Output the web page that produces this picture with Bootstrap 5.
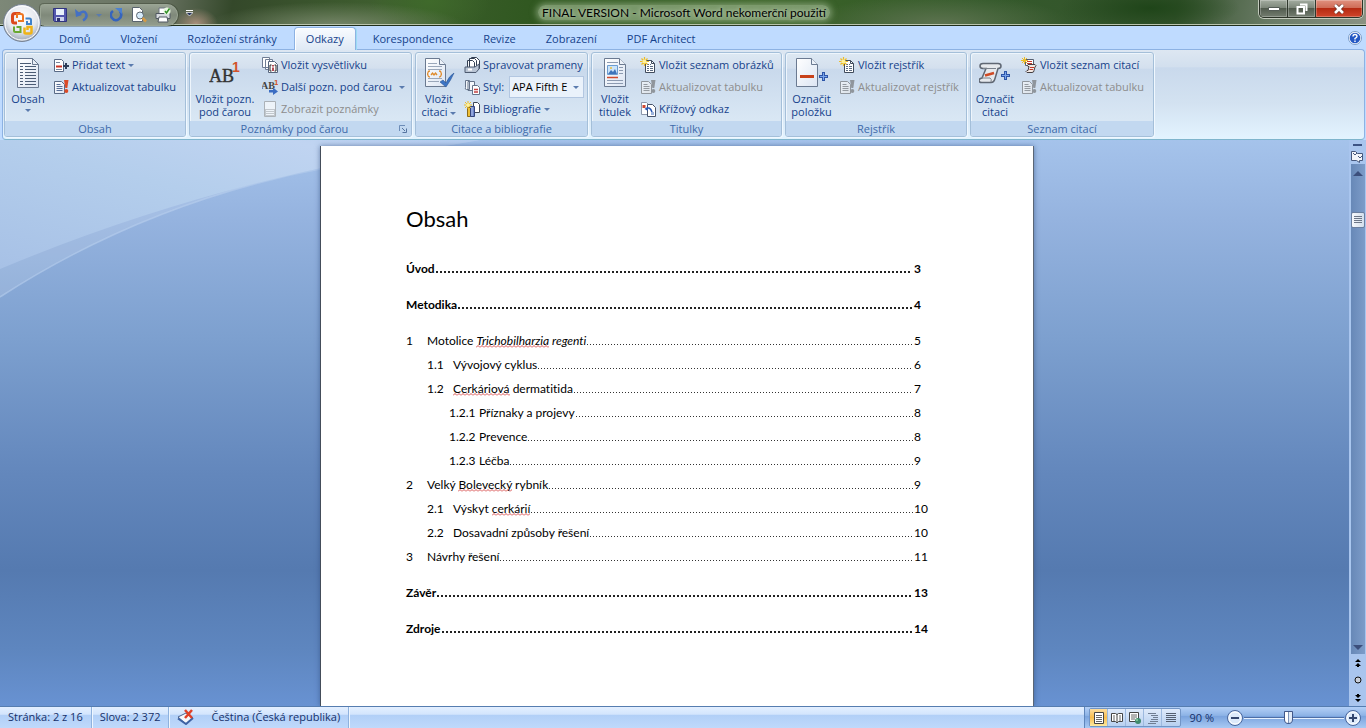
<!DOCTYPE html>
<html lang="cs">
<head>
<meta charset="utf-8">
<meta name="viewport" content="width=device-width, initial-scale=1">
<title>FINAL VERSION - Microsoft Word nekomerční použití</title>
<link href="https://cdn.jsdelivr.net/npm/bootstrap@5.3.0/dist/css/bootstrap.min.css" rel="stylesheet">
<style>
body{font-family:"Open Sans","Noto Sans",sans-serif;font-size:11px;line-height:14px;color:#15428b;background:#bfdbff}
svg{display:block;flex:none}
button{font:inherit;color:inherit;background:none;border:0;padding:0}
a{color:inherit;text-decoration:none}

/* title bar */
.titlebar{height:26px;border-bottom:1px solid #20301c;box-shadow:inset 0 -1px #b9c4ae;
  background:
  radial-gradient(ellipse 22px 16px at 196px 24px,#a98f7c 0,transparent 100%),
  radial-gradient(ellipse 130px 24px at 335px 26px,#77876a 0,transparent 100%),
  radial-gradient(ellipse 60px 40px at 430px 0,#3f6a2b 0,transparent 100%),
  radial-gradient(ellipse 130px 30px at 940px 24px,#5d7350 0,transparent 100%),
  radial-gradient(ellipse 90px 24px at 1150px 8px,#1f4519 0,transparent 100%),
  linear-gradient(100deg,#7d8878 0,#66705f 12%,#34482a 17%,#3f5f2f 28%,#2f571f 40%,#3b6327 55%,#33592a 72%,#36542e 86%,#6a7b66 93%,#8a9283 100%)}
.titlearea{flex:1 1 0}
.qat{width:138px;height:22px;margin-left:40px;padding-left:12px;border:1px solid #9aa594;border-radius:4px 12px 12px 4px;background:linear-gradient(#98a293,#7f897a 50%,#929c8d);box-shadow:0 0 0 1px #3038285e}
.orb{position:absolute;left:2px;top:3px;width:40px;height:40px;z-index:5}
.wtitle{font-family:Lato,sans-serif;font-size:12px;line-height:18px;color:#000;padding-left:2px}
.wtitle span{padding:0 4px;border-radius:8px;background:#a9bf9b99;box-shadow:0 0 6px 2px #a9bf9b99;text-shadow:0 0 4px #dce8d4}
.winbtns{height:18px;border:1px solid #2b3328;border-top:0;border-radius:0 0 5px 5px;box-shadow:0 0 0 1px #c3cabd;overflow:hidden;margin-right:3px}
.winbtns button{width:28px;height:17px;background:linear-gradient(#a3aca0,#7b8578 48%,#525c4f 50%,#747d70);border-right:1px solid #2f372c;box-shadow:inset 0 0 0 1px #ffffff40;display:flex;align-items:center;justify-content:center}
.winbtns .xbtn{width:46px;border-right:0;background:linear-gradient(#e0917f,#ce6a55 48%,#b52a12 50%,#d0452b)}

/* tabs */
.rtabs{height:23px;padding-left:44px;background:#bfdbff}
.rtabs .rtab{padding:6px 15px 3px;font-size:11px;line-height:14px;height:23px}
.rtabs .rtab.active{margin:1px 2px 0;padding:4px 11px 3px;border:1px solid #8db2e3;border-bottom:0;border-radius:4px 4px 0 0;background:linear-gradient(#f8fbff,#dfe9f5);box-shadow:inset 1px 1px #fff,1px 0 #9ddcf2;height:23px;z-index:2}

/* ribbon */
.ribbon{margin:0 1px 0 2px;height:91px;padding:2px 1px;gap:3px;border:1px solid #8db2e3;border-radius:4px;border-bottom-color:#7fb5cd;
  background:linear-gradient(#dde7f2 0,#d2dfee 19%,#c9d9ec 20%,#d3e2f1 60%,#e3f4ff 100%)}
.rgroup{border:1px solid #a4bfd9;border-radius:3px;box-shadow:1px 1px #f0f8ff,inset 1px 1px #eef5fc;height:85px;background:linear-gradient(#dde8f3 0,#d4e0ee 18%,#c9d9ec 20%,#d9e7f4 80%)}
.rbody{height:68px}
.rfoot{height:15px;background:#c2d8f0;color:#3e6aaa;line-height:15px;border-radius:0 0 2px 2px}
.bigbtn{line-height:13px;padding-top:4px;margin-right:2px;display:flex;flex-direction:column;align-items:center}
.bigbtn span{white-space:nowrap;margin-top:3px}
.smalls{padding-top:1px}
.sbtn{height:22px;display:flex;align-items:center;gap:3px;white-space:nowrap}
.sbtn:disabled{color:#8d8d8d}
.sbtn:disabled svg{filter:grayscale(1);opacity:.6}
.caret{width:0;height:0;border:3px solid transparent;border-top-color:#5a7bae;border-bottom:0}
.g1{width:182px}.g2{width:223px}.g3{width:173px}.g4{width:191px}.g5{width:182px}.g6{width:184px}
.w1,.w3,.w4{width:46px}.w2{width:70px}.w5{width:51px}.w6{width:48px}
.stylebox{width:75px;height:22px;border:1px solid #b3c7e1;background:#eaf2fb;color:#000;font:inherit;padding:0 0 0 2px;appearance:none;border-radius:0}
.stylewrap{margin-left:2px}
.stylewrap .caret{position:absolute;right:5px;top:10px;pointer-events:none}

/* workspace */
.work{background:linear-gradient(#a5c3eb 0,#95b3df 14%,#7da0cf 35%,#6488bd 58%,#557ab0 76%,#5e86bf 90%,#6892d2 100%);overflow:hidden}
.swoosh{position:absolute;left:0;top:0}
.sheetcol{padding:6px 0 0 5px}
.sheet{width:714px;background:#fff;color:#000;border-left:1px solid #444d5a;border-right:1px solid #5b6675;box-shadow:0 0 5px #2c4a7a99;padding:57px 105px 0 85px;font-family:Lato,sans-serif;font-size:12px;font-variant-ligatures:none}
.sheet h1{font-size:22px;line-height:32px;font-weight:400;margin:0 0 22px}
.toc{line-height:24px}
.toc li{display:flex;white-space:pre}
.toc .top{font-weight:700;margin:12px 0}
.toc .l1 .num{width:21px}
.toc .l2{padding-left:21px}.toc .l2 .num{width:26px}
.toc .l3{padding-left:43px}.toc .l3 .num{width:30px}
.dots{flex:1;margin:0 1px 0 1px;background:repeating-linear-gradient(90deg,#333 0 1px,transparent 1px 3px) 0 15px/100% 1px no-repeat}
.top .dots{margin-right:2px;background:repeating-linear-gradient(90deg,#222 0 2px,transparent 2px 4px) 0 14px/100% 2px no-repeat}
.pg{width:14px}
.sp{background:url("data:image/svg+xml,%3Csvg xmlns='http://www.w3.org/2000/svg' width='4' height='3'%3E%3Cpath d='M0 2.500L2 .5L4 2.500' fill='none' stroke='%23d23a3a' stroke-width='.9'/%3E%3C/svg%3E") 0 100%/4px 3px repeat-x}
.scrollcol{width:17px;background:#a9c5ee}
.track{width:15px;background:linear-gradient(90deg,#6788b7,#7d9cc9);border-left:1px solid #a9c6ee}
.thumb{width:14px;height:16px;margin-top:32px;border:1px solid #6a7fa0;border-radius:2px;background:linear-gradient(90deg,#f5f8fc,#d3deec)}

/* status bar */
.status{height:22px;border-top:1px solid #567db0;color:#15306a;background:linear-gradient(#e3efff 0,#d3e5fd 35%,#b1cff7 38%,#bfd9fb 100%)}
.status .cell{padding:0 8px 2px;height:21px;display:flex;align-items:center;border-right:1px solid #8fb2de;box-shadow:1px 0 #eef6ff}
.status .tools{background:linear-gradient(#b3d0f7,#8db3e6 40%,#7ba4de 45%,#a8c9f3);border-left:1px solid #5f86bb;padding-left:4px}
.views{height:19px;border:1px solid #7295c6;border-radius:2px;background:linear-gradient(#dfeafa,#b8d0f0)}
.views button{width:18px;height:17px;display:flex;align-items:center;justify-content:center;border-right:1px solid #9db9de}
.views button:last-child{border-right:0}
.views .on{background:linear-gradient(#fbdda0,#f7bd4e 50%,#fde9a0)}
.zoomr{appearance:none;width:100px;height:16px;background:linear-gradient(#4c6ea6,#4c6ea6) 0 7px/100% 1px no-repeat,linear-gradient(#e5f0ff,#e5f0ff) 0 8px/100% 1px no-repeat;margin:0}
.zoomr::-webkit-slider-thumb{appearance:none;width:9px;height:13px;border:1px solid #41588a;border-radius:1px 1px 5px 5px;background:linear-gradient(90deg,#fff 40%,#7d93b8 40% 60%,#dfe9f6 60%)}
</style>
</head>
<body class="vh-100 d-flex flex-column overflow-hidden">

<svg width="0" height="0" class="position-absolute" aria-hidden="true"><defs>
<linearGradient id="pg" x1="0" y1="0" x2="1" y2="1"><stop offset="0" stop-color="#fff"/><stop offset="1" stop-color="#dce5f3"/></linearGradient>
<radialGradient id="orbg" cx=".5" cy=".35" r=".65"><stop offset="0" stop-color="#fff"/><stop offset=".6" stop-color="#e4e8ee"/><stop offset="1" stop-color="#98a2b2"/></radialGradient>
<linearGradient id="sw" x1="0" y1="1" x2="1" y2="0"><stop offset="0" stop-color="#a7c1e6"/><stop offset=".5" stop-color="#b4ceec"/><stop offset=".8" stop-color="#c0d4f1"/><stop offset="1" stop-color="#b4cdf0"/></linearGradient>
<symbol id="upd" viewBox="0 0 16 16"><path d="M1.500 2.500h7l3 3v9h-10z" fill="url(#pg)" stroke="#596a86"/><path d="M3.500 5.500h4m-4 2h6m-6 2h6m-6 2h6" stroke="#586f97"/><path d="M11 1h4.500l-1.200 8h-2z" fill="#dc4a26"/><circle cx="13.300" cy="12" r="2" fill="#dc4a26"/></symbol>
<symbol id="newlist" viewBox="0 0 16 16"><path d="M5.500 3.500h6l3 3v9h-9z" fill="#fff" stroke="#404b5c"/><path d="M11.500 3.500v3h3" fill="none" stroke="#404b5c"/><path d="M7 7.500h2m1 0h1m-4 2h2m1 0h3m-6 2h2m1 0h3m-6 2h2m1 0h3" stroke="#5c6c84"/><path d="M4.500 0v9M0 4.500h9M1.500 1.500l6 6m0-6l-6 6" stroke="#edbd27" stroke-width="1.200"/><circle cx="4.500" cy="4.500" r="2" fill="#fff29a"/></symbol>
</defs></svg>

<header class="position-relative flex-shrink-0">
  <button class="orb" aria-label="Tlačítko Office"><svg width="40" height="40" viewBox="0 0 40 40"><circle cx="20" cy="20" r="18.500" fill="url(#orbg)" stroke="#788393"/><circle cx="20" cy="20" r="17" fill="none" stroke="#fff"/>
    <g fill="none" stroke-width="3"><path d="M18.500 10.500h-5.500q-2.500 0-2.500 2.500v5q0 2 2 2h2.500" stroke="#dc481c"/><path d="M15 15v-4h4q2 0 2 2v5h-5" stroke="#ee7722" stroke-width="2"/><path d="M23.500 15.500h4q1.500 0 1.500 1.500v4h-4v-3" stroke="#3f82c8" stroke-width="2"/><path d="M12 23.500v4q0 1.500 1.500 1.500h5v-5h-4" stroke="#69a832" stroke-width="2"/><path d="M22.500 24.500v5q0 1 1.500 1h4q1.500 0 1.500-1.500v-5h-4v3" stroke="#f0b316" stroke-width="2.500"/></g></svg></button>

  <div class="titlebar d-flex">
    <div class="titlearea d-flex align-items-start pt-1">
      <div class="qat d-flex align-items-center me-2 mt-n1">
        <button aria-label="Uložit"><svg width="14" height="14" viewBox="0 0 14 14"><path d="M.5.5h13v13h-12l-1-1z" fill="#5457ad" stroke="#30347f"/><path d="M3 1h8v6H3z" fill="#eaf1fb"/><path d="M3 9h8v4H3z" fill="#cdd3ec"/><path d="M4 10h3v3H4z" fill="#2e336f"/></svg></button>
        <button class="ms-2" aria-label="Zpět"><svg width="13" height="14" viewBox="0 0 13 14"><path d="M3 6.500q6-5 8-1t-3 7" fill="none" stroke="#4470c4" stroke-width="2.500"/><path d="M0 1l1 8 6-2z" fill="#4470c4"/></svg></button>
        <span class="caret mx-2"></span>
        <button aria-label="Opakovat"><svg width="13" height="14" viewBox="0 0 13 14"><path d="M10 3q3 5-1 8t-7-1 1-7" fill="none" stroke="#3564bd" stroke-width="2.500"/><path d="M5 0h7v6z" fill="#4b80d0"/></svg></button>
        <button class="ms-2" aria-label="Náhled"><svg width="16" height="16" viewBox="0 0 16 16"><path d="M1.500.500h7l3 3v11h-10z" fill="#fff" stroke="#59636d"/><circle cx="9" cy="8.500" r="3.500" fill="#d7ebfa" stroke="#5b6670"/><path d="M11.500 11l3.500 3.500" stroke="#d59a45" stroke-width="2.500"/></svg></button>
        <button class="ms-2" aria-label="Rychlý tisk"><svg width="16" height="16" viewBox="0 0 16 16"><path d="M4 1h7v6H4z" fill="#fff" stroke="#6c747e"/><path d="M1 6.500h14v5H1z" fill="#d5d9de" stroke="#505862"/><path d="M4 10h8l1 5H3z" fill="#fff" stroke="#505862"/><circle cx="12" cy="4" r="3.500" fill="#e8f7e0"/><path d="M10 4l1.500 2L14.500 1.500" fill="none" stroke="#339128" stroke-width="1.500"/></svg></button>
      </div>
      <button class="mt-1" aria-label="Přizpůsobit"><svg width="7" height="9" viewBox="0 0 7 9"><path d="M0 2.500h7" stroke="#fff"/><path d="M0 4.500h7L3.500 8z" fill="#26345a" stroke="#fff" stroke-width=".7"/></svg></button>
    </div>
    <div class="wtitle text-center pt-1"><span>FINAL VERSION - Microsoft Word nekomerční použití</span></div>
    <div class="titlearea d-flex justify-content-end">
      <div class="winbtns d-flex">
        <button aria-label="Minimalizovat"><svg width="12" height="6"><path d="M.5 1.500h11v3H.5z" fill="#fff" stroke="#535b55"/></svg></button>
        <button aria-label="Obnovit"><svg width="12" height="12" viewBox="0 0 12 12"><path d="M4 1.500h6.500v6.500M1.500 4h6.500v6.500h-6.500z" fill="none" stroke="#fff" stroke-width="2"/></svg></button>
        <button class="xbtn" aria-label="Zavřít"><svg width="12" height="10" viewBox="0 0 12 10"><path d="M2 1l8 8m0-8l-8 8" stroke="#6a3026" stroke-width="4"/><path d="M2 1l8 8m0-8l-8 8" stroke="#fff" stroke-width="2.600"/></svg></button>
      </div>
    </div>
  </div>

  <nav class="rtabs d-flex" aria-label="Karty">
    <a class="rtab" href="#">Domů</a><a class="rtab" href="#">Vložení</a><a class="rtab" href="#">Rozložení stránky</a><a class="rtab active" href="#" aria-current="page">Odkazy</a><a class="rtab" href="#">Korespondence</a><a class="rtab" href="#">Revize</a><a class="rtab" href="#">Zobrazení</a><a class="rtab" href="#">PDF Architect</a>
    <button class="ms-auto me-1" aria-label="Nápověda"><svg width="14" height="14" viewBox="0 0 14 14"><circle cx="7" cy="7" r="6.500" fill="#fff" stroke="#7a9cc8"/><circle cx="7" cy="7" r="5.300" fill="#2458c4"/><path d="M5 5.500q0-2 2-2t2 1.800q0 1-2 2.200v1M7 9.500v1.500" fill="none" stroke="#fff" stroke-width="1.400"/></svg></button>
  </nav>

  <div class="ribbon d-flex">
    <section class="rgroup g1">
      <div class="rbody d-flex">
        <button class="bigbtn w1"><svg width="32" height="32" viewBox="0 0 32 32"><path d="M5.500 1.500h15l6 6v23h-21z" fill="url(#pg)" stroke="#6b7a91"/><path d="M20.500 1.500v6h6z" fill="#e8eef6" stroke="#6b7a91"/><path d="M8 6.500h11M8 9.500h3m2 0h11M8 12.500h3m2 0h11M8 15.500h3m2 0h11M8 18.500h3m2 0h11M8 21.500h3m2 0h11M8 24.500h3m2 0h11M8 27.500h3m2 0h11" stroke="#4a5b74"/></svg><span>Obsah</span><i class="caret mt-1"></i></button>
        <div class="smalls">
          <button class="sbtn"><svg width="16" height="16" viewBox="0 0 16 16"><path d="M1.500 2.500h7l2 2v10h-9z" fill="#fff" stroke="#596a86"/><path d="M3 5.500h4m-4 7h6" stroke="#76859c"/><path d="M3 9.500h6" stroke="#ca3426" stroke-width="2"/><path d="M13 6v6m-3-3h6" stroke="#2e3d58" stroke-width="2"/></svg>Přidat text<i class="caret"></i></button>
          <button class="sbtn"><svg width="16" height="16"><use href="#upd"/></svg>Aktualizovat tabulku</button>
        </div>
      </div>
      <div class="rfoot text-center">Obsah</div>
    </section>

    <section class="rgroup g2">
      <div class="rbody d-flex">
        <button class="bigbtn w2"><svg width="32" height="32" viewBox="0 0 32 32"><text x="0" y="25" font-family="Liberation Serif,serif" font-size="18" fill="#333" stroke="#333" stroke-width=".4">AB</text><text x="23" y="15" font-family="Liberation Sans,sans-serif" font-size="14" font-weight="700" fill="#d3532b">1</text></svg><span>Vložit pozn.<br>pod čarou</span></button>
        <div class="smalls">
          <button class="sbtn"><svg width="16" height="16" viewBox="0 0 16 16"><path d="M.500.500h7v10h-7zM3.500 2.500h7v10h-7z" fill="#fff" stroke="#6f7d94"/><path d="M6.500 4.500h6l3 3v8h-9z" fill="#fff" stroke="#56657d"/><path d="M9.500 8H8v6h1.500m3-6h1.500v6h-1.500" fill="none" stroke="#222"/><path d="M11 8v1.500m0 1v3.500" stroke="#a11f2c" stroke-width="1.600"/></svg>Vložit vysvětlivku</button>
          <button class="sbtn"><svg width="16" height="16" viewBox="0 0 16 16"><text x="-1" y="10" font-family="Liberation Serif,serif" font-size="10" font-weight="700" fill="#444">AB</text><text x="12" y="6" font-family="Liberation Sans,sans-serif" font-size="8" font-weight="700" fill="#d3532b">1</text><path d="M7 11h4V8.500l5 4-5 3.500v-2.500H7z" fill="#3b6dc2"/></svg>Další pozn. pod čarou<i class="caret ms-1"></i></button>
          <button class="sbtn" disabled><svg width="16" height="16" viewBox="0 0 16 16"><path d="M2.500.5h11v15h-11z" fill="#fff" stroke="#8793a5"/><path d="M3 8h10v7H3z" fill="#aab6c8"/><path d="M4 9.500h8m-8 2h8m-8 2h8" stroke="#fff"/></svg>Zobrazit poznámky</button>
        </div>
      </div>
      <div class="rfoot d-flex align-items-center pe-1"><button class="order-2" aria-label="Další nastavení"><svg width="8" height="8" viewBox="0 0 8 8"><path d="M.5 6V.5H6" fill="none" stroke="#6c8cb7"/><path d="M3 3l3 3M7.500 3.500v4h-4" fill="none" stroke="#55749f"/></svg></button><span class="flex-fill text-center">Poznámky pod čarou</span></div>
    </section>

    <section class="rgroup g3">
      <div class="rbody d-flex">
        <button class="bigbtn w3"><svg width="32" height="32" viewBox="0 0 32 32"><path d="M2.500 1.500h14l6 6v22h-20z" fill="url(#pg)" stroke="#6b7a91"/><path d="M16.500 1.500v6h6" fill="#edf2f9" stroke="#6b7a91"/><path d="M5 6.500h9M5 9.500h14M5 12.500h14M5 21.500h14M5 24.500h11" stroke="#9aa7ba"/><path d="M7 14q-2 0-2 1.500T4 17q1 0 1 1.500T7 20m9-6q2 0 2 1.500t1 1.500q-1 0-1 1.500T16 20M8 18l1.500-2 1.500 2 1.500-2 1.500 2" fill="none" stroke="#df8b2c" stroke-width="1.300"/><path d="M17 25l3-2 3 3q3-7 8-10-3 7-8 14z" fill="#3c74c4" stroke="#2a5596" stroke-width=".6"/></svg><span>Vložit<br>citaci <i class="caret d-inline-block align-middle"></i></span></button>
        <div class="smalls">
          <button class="sbtn"><svg width="16" height="16" viewBox="0 0 16 16"><path d="M7.500.5h5l3 3v8h-8z" fill="#fff" stroke="#333f52"/><path d="M5.500 1.500h5l2 2v8h-7zM3.500 3.500h5l2 2v6h-7z" fill="#fff" stroke="#333f52"/><path d="M1 10h10l4-3v5l-3 3.500H1z" fill="#b9c4d4" stroke="#4c5a70"/><path d="M4 12.500h4" stroke="#fff" stroke-width="2"/></svg>Spravovat prameny</button>
          <div class="sbtn"><svg width="16" height="16" viewBox="0 0 16 16"><path d="M1.500 1.500h4v9h-3q-2 0-1-2zM4 2.500h6.500v9H4z" fill="#f4f7fb" stroke="#65748b"/><path d="M8.500 6.500h5l2 2v7h-7z" fill="#fff" stroke="#65748b"/><path d="M10 10.500h4M10 13h4" stroke="#c34242" stroke-width="1.500"/></svg><label for="styl">Styl:</label>
            <span class="stylewrap position-relative"><select id="styl" class="stylebox"><option>APA Fifth E</option></select><i class="caret"></i></span></div>
          <button class="sbtn"><svg width="16" height="16" viewBox="0 0 16 16"><path d="M9.500 1.500h4l2 2v8h-6z" fill="#fff" stroke="#3d4757"/><path d="M3.500 6.500h3v9h-3z" fill="#eebf37" stroke="#8c6b17"/><path d="M6.500 5.500h4v10h-4z" fill="#6c86c9" stroke="#34457d"/><path d="M8 6v9" stroke="#b6c5ee"/><path d="M4 0v8M0 4h8M1 1l6 6m0-6L1 7" stroke="#edbd27"/><circle cx="4" cy="4" r="1.800" fill="#fff29a"/></svg>Bibliografie<i class="caret"></i></button>
        </div>
      </div>
      <div class="rfoot text-center">Citace a bibliografie</div>
    </section>

    <section class="rgroup g4">
      <div class="rbody d-flex">
        <button class="bigbtn w4"><svg width="32" height="32" viewBox="0 0 32 32"><path d="M5.500 1.500h15l6 6v22h-21z" fill="url(#pg)" stroke="#6b7a91"/><path d="M20.500 1.500v6h6" fill="#edf2f9" stroke="#6b7a91"/><path d="M8 5.500h11M20 10.500h4m-4 3h4m-4 3h4M8 23.500h16m-16 3h16" stroke="#8c9ab0"/><path d="M8.500 8.500h10v9h-10z" fill="#cbe4fa" stroke="#6c9cd0"/><path d="M9 17l3-4 2 2 2-3 2 5z" fill="#3d74bb"/><circle cx="12" cy="11" r="1" fill="#e9bc3d"/><path d="M8 20.500h11" stroke="#cf4a2e" stroke-width="1.500"/></svg><span>Vložit<br>titulek</span></button>
        <div class="smalls">
          <button class="sbtn"><svg width="16" height="16"><use href="#newlist"/></svg>Vložit seznam obrázků</button>
          <button class="sbtn" disabled><svg width="16" height="16"><use href="#upd"/></svg>Aktualizovat tabulku</button>
          <button class="sbtn"><svg width="16" height="16" viewBox="0 0 16 16"><path d="M1.500 1.500h5l2 2v10h-7z" fill="#fff" stroke="#8b97aa"/><path d="M7.500 3.500h5l3 3v9h-8z" fill="#fff" stroke="#46536a"/><path d="M2.500 4h3v3h-3z" fill="#d14832"/><path d="M6 8q4-3 6 3" fill="none" stroke="#2c59b0" stroke-width="1.500"/><path d="M4.500 8L8 5.500V10z" fill="#2c59b0"/><path d="M11 11h3v3h-3z" fill="#9cb4dc"/></svg>Křížový odkaz</button>
        </div>
      </div>
      <div class="rfoot text-center">Titulky</div>
    </section>

    <section class="rgroup g5">
      <div class="rbody d-flex">
        <button class="bigbtn w5"><svg width="32" height="32" viewBox="0 0 32 32"><path d="M.500 1.500h15l6 6v22h-21z" fill="url(#pg)" stroke="#6b7a91"/><path d="M15.500 1.500v6h6" fill="#edf2f9" stroke="#6b7a91"/><path d="M4 18h14v3H4z" fill="#c8421a"/><path d="M27.500 15v9M23 19.500h9" stroke="#2d55a8" stroke-width="3"/><path d="M27.500 16v7M24 19.500h7" stroke="#79a4ea"/></svg><span>Označit<br>položku</span></button>
        <div class="smalls">
          <button class="sbtn"><svg width="16" height="16"><use href="#newlist"/></svg>Vložit rejstřík</button>
          <button class="sbtn" disabled><svg width="16" height="16"><use href="#upd"/></svg>Aktualizovat rejstřík</button>
        </div>
      </div>
      <div class="rfoot text-center">Rejstřík</div>
    </section>

    <section class="rgroup g6">
      <div class="rbody d-flex">
        <button class="bigbtn w6"><svg width="32" height="32" viewBox="0 0 32 32"><path d="M4 6.500h15q3 0 3 2.500t-3 2.500l-3 10q-1 4-4 4H3q-3 0-3-2t3-2.500l4-9.500H4q-3 0-3-2.500t3-2.500z" fill="#e6e9ed" stroke="#5f6773" stroke-width="1.500"/><path d="M4 11.500h13M3 21h8q2 1 1 4" fill="none" stroke="#7b828c"/><path d="M6 18.500l9-2.500" stroke="#cf4a25" stroke-width="2.500"/><path d="M26.500 14v9M22 18.500h9" stroke="#2d55a8" stroke-width="3"/><path d="M26.500 15v7M23 18.500h7" stroke="#79a4ea"/></svg><span>Označit<br>citaci</span></button>
        <div class="smalls">
          <button class="sbtn"><svg width="16" height="16" viewBox="0 0 16 16"><path d="M4.500 2.500h8v6h-8z" fill="#fff" stroke="#555f70"/><path d="M6 4.500h5M6 6.500h5" stroke="#c33a2b"/><path d="M7 7.500h7q2 1 0 2.500l-1 3.500q0 2-2 2H6q-2-1 0-2h1l1-4H7q-1-1 0-2z" fill="#f3e9e4" stroke="#453e40"/><path d="M9 10.500h4M8.500 12.500h3.500" stroke="#c33a2b" stroke-width="1.200"/><path d="M3.500 0v7M0 3.500h7M1 1l5 5m0-5L1 6" stroke="#edbd27"/></svg>Vložit seznam citací</button>
          <button class="sbtn" disabled><svg width="16" height="16"><use href="#upd"/></svg>Aktualizovat tabulku</button>
        </div>
      </div>
      <div class="rfoot text-center">Seznam citací</div>
    </section>
  </div>
</header>

<main class="work position-relative flex-fill d-flex">
  <svg class="swoosh" width="480" height="170" viewBox="0 0 480 170"><path d="M0 157Q150 60 340 24L480 0H0z" fill="#ffffff22"/><path d="M0 157Q150 60 330 27" fill="none" stroke="#b5cdec" stroke-opacity=".6" stroke-width="1.500"/><path d="M0 129Q165 60 340 24L480 0H0z" fill="url(#sw)"/></svg>
  <div class="sheetcol flex-fill d-flex justify-content-center position-relative">
    <article class="sheet">
      <h1>Obsah</h1>
      <ul class="toc list-unstyled">
        <li class="top"><span>Úvod</span><span class="dots"></span><span class="pg">3</span></li>
        <li class="top"><span>Metodika</span><span class="dots"></span><span class="pg">4</span></li>
        <li class="l1"><span class="num">1</span><span>Motolice <em><span class="sp">Trichobilharzia</span> regenti</em></span><span class="dots"></span><span class="pg">5</span></li>
        <li class="l2"><span class="num">1.1</span><span>Vývojový cyklus</span><span class="dots"></span><span class="pg">6</span></li>
        <li class="l2"><span class="num">1.2</span><span><span class="sp">Cerkáriová</span> dermatitida</span><span class="dots"></span><span class="pg">7</span></li>
        <li class="l3"><span class="num">1.2.1</span><span>Příznaky a projevy</span><span class="dots"></span><span class="pg">8</span></li>
        <li class="l3"><span class="num">1.2.2</span><span>Prevence</span><span class="dots"></span><span class="pg">8</span></li>
        <li class="l3"><span class="num">1.2.3</span><span>Léčba</span><span class="dots"></span><span class="pg">9</span></li>
        <li class="l1"><span class="num">2</span><span>Velký <span class="sp">Bolevecký</span> rybník</span><span class="dots"></span><span class="pg">9</span></li>
        <li class="l2"><span class="num">2.1</span><span>Výskyt <span class="sp">cerkárií</span></span><span class="dots"></span><span class="pg">10</span></li>
        <li class="l2"><span class="num">2.2</span><span>Dosavadní způsoby řešení</span><span class="dots"></span><span class="pg">10</span></li>
        <li class="l1"><span class="num">3</span><span>Návrhy řešení</span><span class="dots"></span><span class="pg">11</span></li>
        <li class="top"><span>Závěr</span><span class="dots"></span><span class="pg">13</span></li>
        <li class="top"><span>Zdroje</span><span class="dots"></span><span class="pg">14</span></li>
      </ul>
    </article>
  </div>
  <div class="scrollcol position-relative d-flex flex-column align-items-center">
    <svg width="15" height="24" viewBox="0 0 15 24"><path d="M3 5h9" stroke="#3c5384" stroke-width="2"/><path d="M1.500 11.500h4l2 2h5v7h-3v2l-3-2h-5z" fill="#f3f5fa" stroke="#47587c"/><path d="M3 13l2 2 2-2m1 3l2 2 2-2" fill="none" stroke="#47587c"/></svg>
    <div class="track flex-fill d-flex flex-column align-items-center">
      <svg width="10" height="16" viewBox="0 0 10 16"><path d="M0 12h10L5 7z" fill="#3c4f7c"/></svg>
      <div class="thumb"><svg width="12" height="14" viewBox="0 0 12 14"><path d="M2 3.500h8m-8 2h8m-8 2h8m-8 2h8" stroke="#6c7688"/></svg></div>
      <svg class="mt-auto" width="10" height="13" viewBox="0 0 10 13"><path d="M0 4h10L5 9z" fill="#3c4f7c"/></svg>
    </div>
    <svg width="12" height="52" viewBox="0 0 12 52"><path d="M3 8h6L6 5zM3 12h6L6 9zM5 12h2v1H5zM3 41h6l-3 3zM3 45h6l-3 3zM5 40h2v1H5z" fill="#000"/><circle cx="6" cy="26" r="3" fill="#c9cfda" stroke="#111"/></svg>
  </div>
</main>

<footer class="status d-flex flex-shrink-0">
  <div class="cell">Stránka: 2 z 16</div>
  <div class="cell">Slova: 2 372</div>
  <div class="cell border-0 shadow-none"><svg width="18" height="16" viewBox="0 0 18 16"><path d="M1 8l8-4 7 5-7 6z" fill="#f5f7fb" stroke="#4b618c"/><path d="M1 9.500L9 15l7-6" fill="none" stroke="#3e62a4" stroke-width="2"/><path d="M8 1l7 8m0-8L8 9" stroke="#df4028" stroke-width="2.500"/></svg></div>
  <div class="cell">Čeština (Česká republika)</div>
  <div class="tools ms-auto d-flex align-items-center">
    <div class="views d-flex">
      <button class="on" aria-label="Rozložení při tisku"><svg width="12" height="12" viewBox="0 0 12 12"><path d="M1.500.500h9v11h-9z" fill="#fff" stroke="#444"/><path d="M3 3.500h6m-6 2h6m-6 2h6m-6 2h6" stroke="#666"/></svg></button>
      <button aria-label="Čtení"><svg width="12" height="12" viewBox="0 0 12 12"><path d="M.500 1.500h4l1.500 1 1.500-1h4v8h-4L6 11 4.500 9.500h-4zM6 2v9" fill="#fff" stroke="#444"/><path d="M2 4h2m-2 2h2m-2 2h2m4-4h2M8 6h2M8 8h2" stroke="#666"/></svg></button>
      <button aria-label="Web"><svg width="12" height="12" viewBox="0 0 12 12"><path d="M.500.500h9v9h-9z" fill="#fff" stroke="#444"/><path d="M2 3h6M2 5h6M2 7h4" stroke="#666"/><circle cx="9" cy="9" r="3" fill="#3f8a6d"/><circle cx="8" cy="8" r="1" fill="#8fd0a0"/></svg></button>
      <button aria-label="Osnova"><svg width="12" height="12" viewBox="0 0 12 12"><path d="M1 1.500h8m-5 2h7m-5 2h5m-7 2h7m-8 2h8m-10 2h8" stroke="#6f7d92"/></svg></button>
      <button aria-label="Koncept"><svg width="12" height="12" viewBox="0 0 12 12"><path d="M1 1.500h10m-10 2h10m-10 2h10m-10 2h10m-10 2h10" stroke="#555f70"/></svg></button>
    </div>
    <button class="mx-1 px-1 text-nowrap">90 %</button>
    <button class="ms-1" aria-label="Oddálit"><svg width="18" height="18" viewBox="0 0 18 18"><circle cx="9" cy="9" r="7.500" fill="#dce9fa" stroke="#49669c"/><circle cx="9" cy="9" r="6" fill="none" stroke="#fff"/><path d="M5 9h8" stroke="#33466e" stroke-width="2"/></svg></button>
    <input class="zoomr" type="range" min="0" max="100" value="44" aria-label="Lupa">
    <button class="me-1" aria-label="Přiblížit"><svg width="18" height="18" viewBox="0 0 18 18"><circle cx="9" cy="9" r="7.500" fill="#dce9fa" stroke="#49669c"/><circle cx="9" cy="9" r="6" fill="none" stroke="#fff"/><path d="M5 9h8M9 5v8" stroke="#33466e" stroke-width="2"/></svg></button>
  </div>
</footer>
<script src="https://cdn.jsdelivr.net/npm/bootstrap@5.3.0/dist/js/bootstrap.bundle.min.js"></script>
</body>
</html>
